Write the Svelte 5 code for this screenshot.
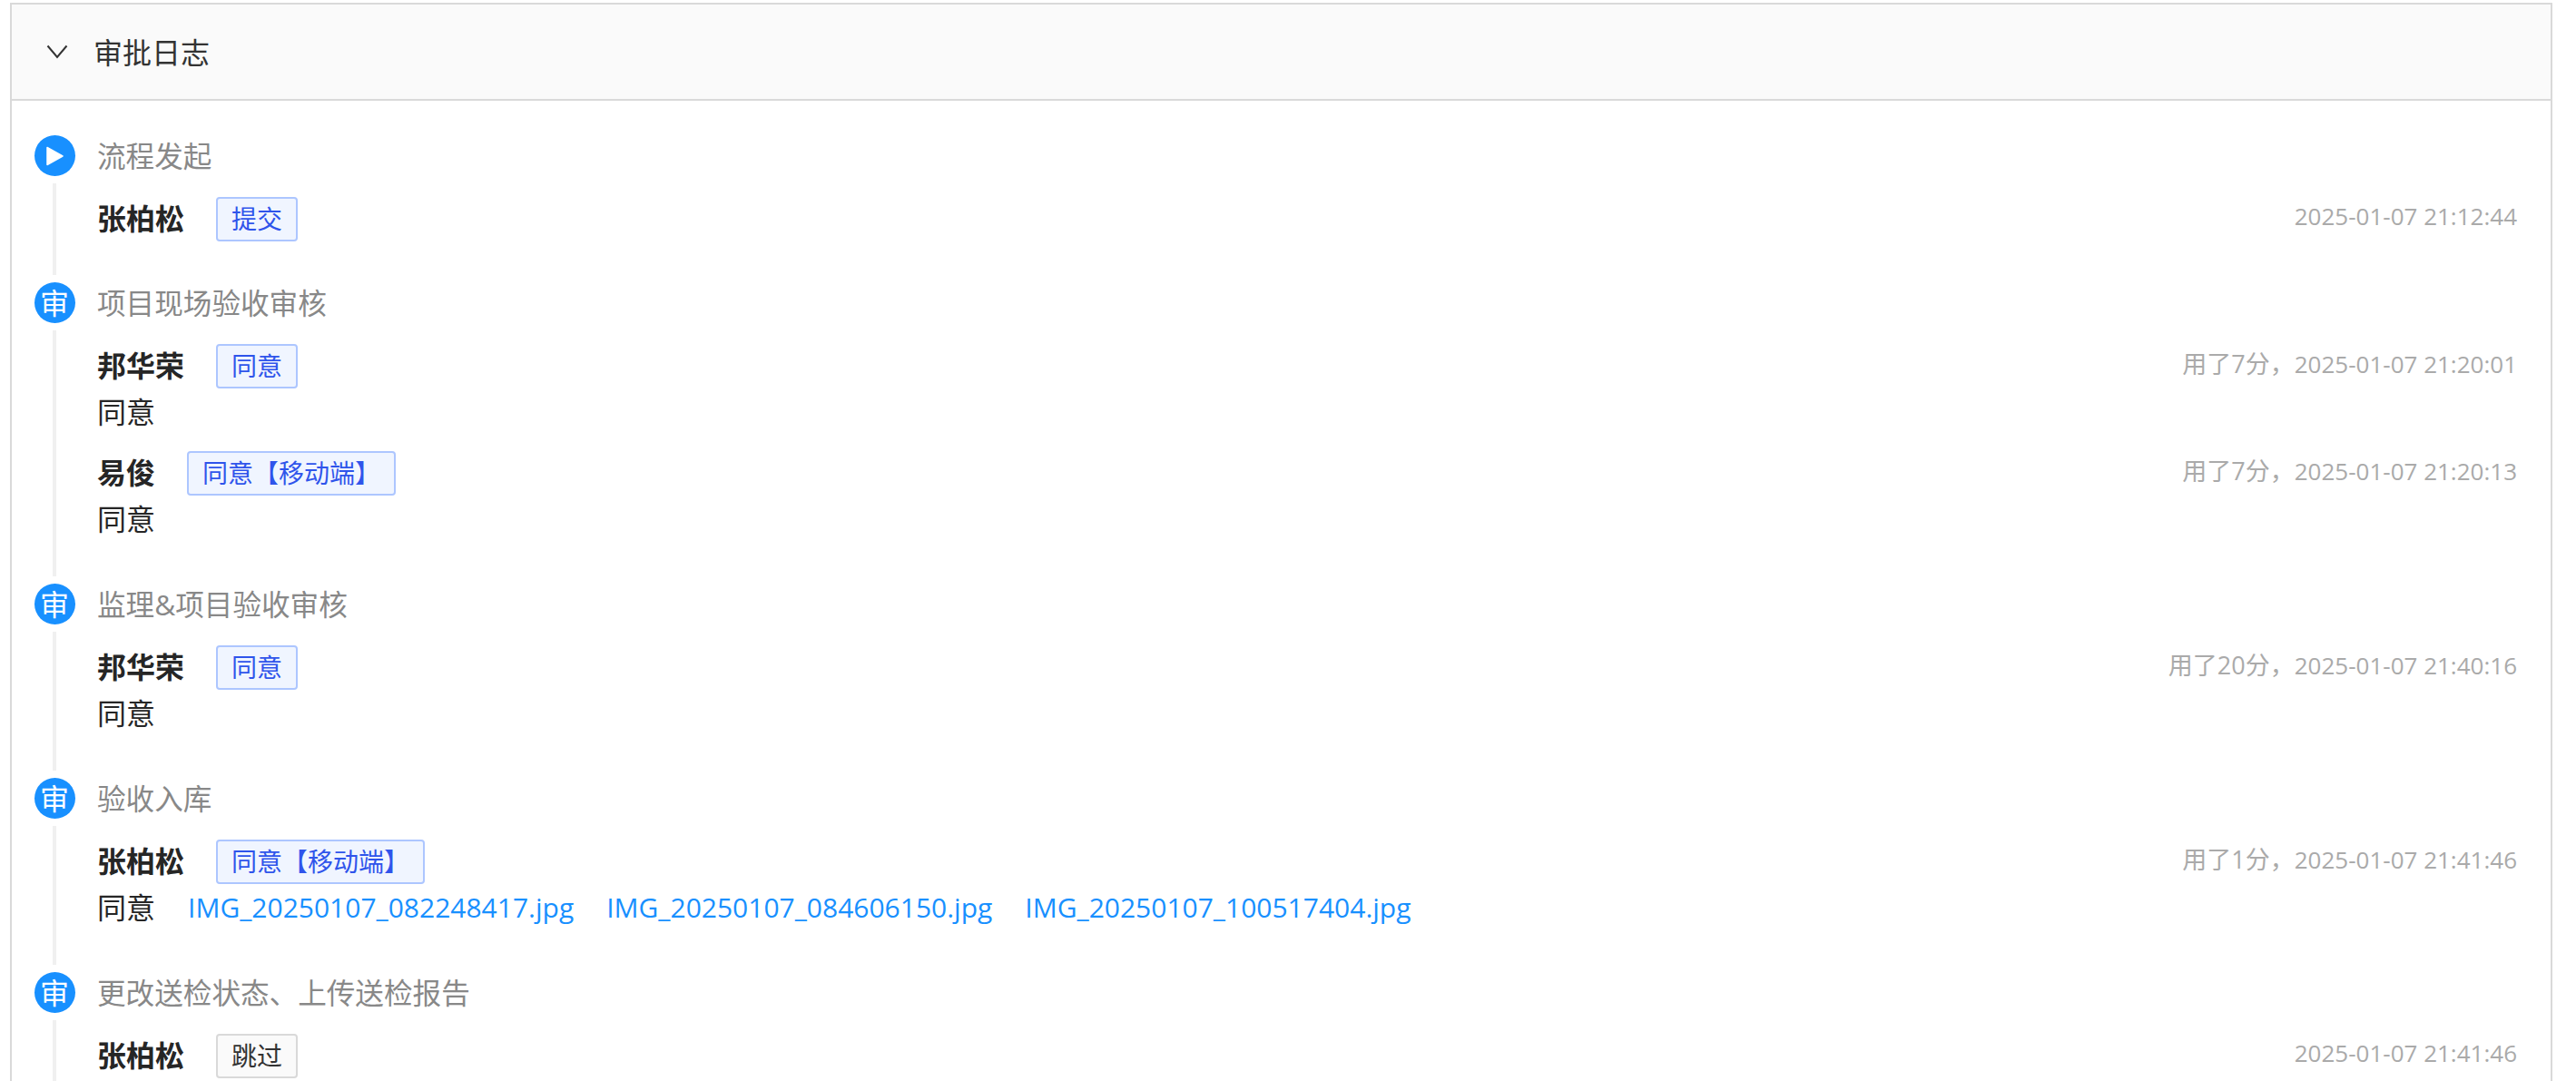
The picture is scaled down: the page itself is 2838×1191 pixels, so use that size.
<script>
    const nodes = [
        {
            title: "流程发起",
            start: true,
            rows: [{ name: "张柏松", tag: "提交", time: "2025-01-07 21:12:44" }],
        },
        {
            title: "项目现场验收审核",
            rows: [
                { name: "邦华荣", tag: "同意", used: "用了7分，", time: "2025-01-07 21:20:01", comment: "同意" },
                { name: "易俊", tag: "同意【移动端】", used: "用了7分，", time: "2025-01-07 21:20:13", comment: "同意" },
            ],
        },
        {
            title: "监理&项目验收审核",
            rows: [{ name: "邦华荣", tag: "同意", used: "用了20分，", time: "2025-01-07 21:40:16", comment: "同意" }],
        },
        {
            title: "验收入库",
            rows: [
                {
                    name: "张柏松",
                    tag: "同意【移动端】",
                    used: "用了1分，",
                    time: "2025-01-07 21:41:46",
                    comment: "同意",
                    files: ["IMG_20250107_082248417.jpg", "IMG_20250107_084606150.jpg", "IMG_20250107_100517404.jpg"],
                },
            ],
        },
        {
            title: "更改送检状态、上传送检报告",
            rows: [{ name: "张柏松", tag: "跳过", plain: true, time: "2025-01-07 21:41:46" }],
        },
    ];
</script>

<div class="page">
    <section class="card">
        <header class="head">
            <svg class="arrow" viewBox="0 0 24 16" width="24" height="16">
                <path d="M1.5 1.5 L12 14 L22.5 1.5" fill="none" stroke="#333" stroke-width="2" />
            </svg>
            <span>审批日志</span>
        </header>
        <div class="list">
            {#each nodes as node}
                <div class="node">
                    <div class="rail">
                        <div class="dot">
                            {#if node.start}
                                <svg viewBox="0 0 20 22" width="20" height="22">
                                    <path d="M2 1.5 L19 11 L2 20.5 Z" fill="#fff" stroke="#fff" stroke-linejoin="round" stroke-width="1.5" />
                                </svg>
                            {:else}
                                审
                            {/if}
                        </div>
                        <div class="line"></div>
                    </div>
                    <div class="body">
                        <div class="title">{node.title}</div>
                        {#each node.rows as row}
                            <div class="row">
                                <div class="who">
                                    <b class="name">{row.name}</b>
                                    <span class="tag" class:plain={row.plain}>{row.tag}</span>
                                    <span class="time"><span class="used">{row.used ?? ""}</span>{row.time}</span>
                                </div>
                                {#if row.comment}
                                    <div class="comment">
                                        <span>{row.comment}</span>
                                        {#each row.files ?? [] as file}
                                            <a href="#top">{file}</a>
                                        {/each}
                                    </div>
                                {/if}
                            </div>
                        {/each}
                    </div>
                </div>
            {/each}
        </div>
    </section>
</div>

<style>
    :global(body) {
        margin: 0;
        background: #fff;
    }
    .page {
        height: 1191px;
        overflow: hidden;
        padding: 3px 26px 0 11px;
        box-sizing: border-box;
        font-family: "Open Sans", "Noto Sans CJK SC", sans-serif;
        color: #333;
    }
    .card {
        border: 2px solid #d9d9d9;
        border-bottom: 0;
        min-height: 1300px;
    }
    .head {
        display: flex;
        align-items: center;
        gap: 28px;
        height: 104px;
        padding-left: 38px;
        background: #fafafa;
        border-bottom: 2px solid #d9d9d9;
        font-size: 32px;
    }
    .head span {
        margin-bottom: 2px;
    }
    .list {
        padding: 38px 37px 0 24px;
    }
    .node {
        display: flex;
        gap: 24px;
    }
    .rail {
        width: 46px;
        display: flex;
        flex-direction: column;
        align-items: center;
    }
    .dot {
        width: 45px;
        height: 45px;
        border-radius: 50%;
        background: #1890ff;
        color: #fff;
        font-size: 32px;
        line-height: 45px;
        text-align: center;
        display: flex;
        align-items: center;
        justify-content: center;
    }
    .line {
        flex: 1;
        width: 4px;
        margin: 8px 0;
        background: #f0f0f0;
    }
    .body {
        flex: 1;
        padding-bottom: 47px;
    }
    .title {
        font-size: 31.6px;
        line-height: 45px;
        color: #888;
    }
    .row {
        margin-top: 20px;
    }
    .row + .row {
        margin-top: 16px;
    }
    .who {
        display: flex;
        align-items: center;
        height: 50px;
    }
    .name {
        font-size: 32px;
        color: #262626;
        margin-right: 35px;
    }
    .tag {
        font-size: 28px;
        line-height: 45px;
        padding: 0 15px;
        margin-top: 4px;
        border: 2px solid #adc6ff;
        border-radius: 4px;
        background: #f0f5ff;
        color: #2f54eb;
    }
    .tag.plain {
        border-color: #d9d9d9;
        background: #fafafa;
        color: #333;
    }
    .time {
        margin-left: auto;
        margin-bottom: 4px;
        font-size: 26px;
        color: #aaa;
    }
    .used {
        font-size: 27px;
    }
    .comment {
        display: flex;
        gap: 36px;
        margin-top: 3px;
        margin-bottom: -1px;
        font-size: 32px;
        line-height: 50px;
        color: #262626;
    }
    .comment a {
        font-size: 30px;
        color: #1890ff;
        text-decoration: none;
    }
</style>
